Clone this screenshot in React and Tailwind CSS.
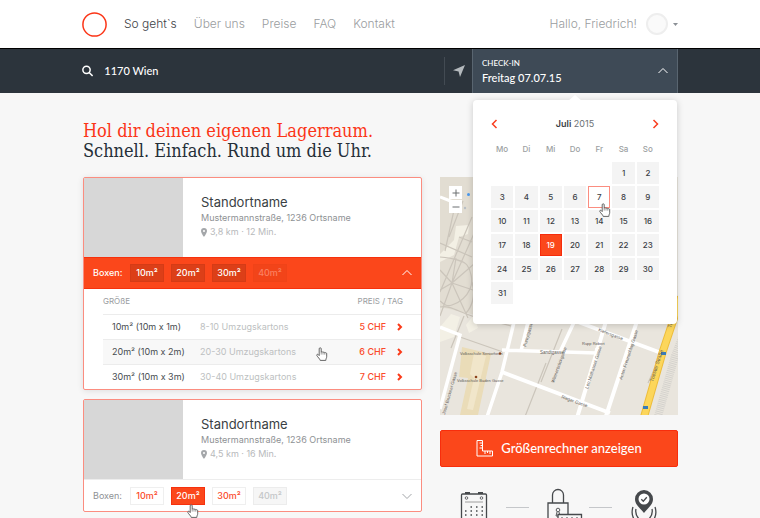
import { useState } from 'react'
import clsx from 'clsx'

const NAV = ['Über uns', 'Preise', 'FAQ', 'Kontakt']
const DAYS = ['Mo', 'Di', 'Mi', 'Do', 'Fr', 'Sa', 'So']
const SIZES = ['10m²', '20m²', '30m²', '40m²']

// July 2015 view, five empty slots before the 1st
const WEEKS = [0, 1, 2, 3, 4, 5].map(w => DAYS.map((_, d) => {
  const n = w * 7 + d - 4
  return n > 0 && n < 32 ? n : null
}))

const OFFERS = [
  { size: '10m² (10m x 1m)', boxes: '8-10 Umzugskartons', price: '5 CHF' },
  { size: '20m² (10m x 2m)', boxes: '20-30 Umzugskartons', price: '6 CHF', hover: true },
  { size: '30m² (10m x 3m)', boxes: '30-40 Umzugskartons', price: '7 CHF' },
]

function Chevron({ d, className }) {
  return (
    <svg viewBox="0 0 12 12" className={className} fill="none" stroke="currentColor" aria-hidden="true">
      <path d={d} />
    </svg>
  )
}

function Hand({ className }) {
  return (
    <svg viewBox="0 0 12 14" className={clsx('pointer-events-none absolute z-30 h-[14px] w-[12px]', className)} aria-hidden="true">
      <path d="M3.2 8.6V1.8c0-1.4 2-1.4 2 0v3.4c.3-.7 1.6-.6 1.8.3.4-.6 1.6-.5 1.8.4.5-.5 1.9-.3 1.9.8v3.1c0 1-.8 1.7-.9 3.6H4.2C4 12 1.6 10 .9 8.7.3 7.5 1.6 6.8 2.3 7.6z" fill="#fff" stroke="#555" strokeWidth=".9" strokeLinejoin="round" />
      <path d="M5.2 5v2.6M7 5.6v2M8.8 6v1.7" fill="none" stroke="#777" strokeWidth=".7" />
    </svg>
  )
}

function Header() {
  return (
    <header className="flex h-12 items-center bg-white px-[82px] text-[12px] font-light text-[#9a9da0]">
      <a href="#start" aria-label="Start" className="mr-[17px]">
        <svg viewBox="0 0 25 25" className="size-[25px]"><circle cx="12.5" cy="12.5" r="11.6" fill="none" stroke="#fb3517" strokeWidth="1.5" /></svg>
      </a>
      <nav className="flex items-center gap-[17px]">
        <a href="#so" className="text-[#3d4246]">So geht`s</a>
        {NAV.map(n => <a key={n} href="#nav">{n}</a>)}
      </nav>
      <button className="ml-auto flex items-center">
        <span>Hallo, Friedrich!</span>
        <span className="ml-[9px] size-[22px] rounded-full border-2 border-[#eeeeee] bg-[#fafafa]" />
        <svg viewBox="0 0 5 3" className="ml-[5px] h-[3px] w-[5px]"><path d="M0 0h5L2.5 3z" fill="#8b9096" /></svg>
      </button>
    </header>
  )
}

function Calendar() {
  const [selected, setSelected] = useState(19)
  return (
    <div className="absolute inset-x-px top-full z-20 mt-[7px] rounded-sm bg-white px-4 pt-[15px] pb-[18px] text-[#3b4045] shadow-[0_1px_7px_rgba(0,0,0,0.18)]">
      <svg viewBox="0 0 14 6" className="absolute -top-[5px] left-1/2 h-[6px] w-[14px] -translate-x-1/2"><path d="M0 6L7 0l7 6z" fill="#fff" /></svg>
      <div className="flex h-[18px] items-center justify-between">
        <button aria-label="Voriger Monat" className="text-[#f93d1e]"><Chevron d="M7.5 2L3.5 6l4 4" className="size-3 stroke-[1.5]" /></button>
        <h2 className="text-[9px] text-[#6d7175]"><b className="font-semibold text-[#3b4045]">Juli</b> 2015</h2>
        <button aria-label="Nächster Monat" className="text-[#f93d1e]"><Chevron d="M4.5 2l4 4-4 4" className="size-3 stroke-[1.5]" /></button>
      </div>
      <table className="mt-[7px] w-full table-fixed border-separate border-spacing-[2px] text-center">
        <thead>
          <tr>{DAYS.map(d => <th key={d} className="h-[18px] p-0 pb-1 text-[8px] font-medium text-[#9c9fa2]">{d}</th>)}</tr>
        </thead>
        <tbody>
          {WEEKS.map((week, i) => (
            <tr key={i}>
              {week.map((n, j) => (
                <td key={j} className="h-[22px] p-0">
                  {n && (
                    <button
                      onClick={() => setSelected(n)}
                      className={clsx('relative block h-[22px] w-full text-[8px] leading-[20px] font-medium',
                        n === selected ? 'border border-[#f62c0c] bg-[#fb471b] text-white'
                          : n === 7 ? 'border border-[#fb8d80] bg-white' : 'border border-[#f4f4f4] bg-[#f4f4f4]')}
                    >
                      {n}
                      {n === 7 && <Hand className="top-4 left-[10px]" />}
                    </button>
                  )}
                </td>
              ))}
            </tr>
          ))}
        </tbody>
      </table>
    </div>
  )
}

function SearchBar() {
  return (
    <div className="flex h-[45px] items-stretch border-t border-black bg-[#2c343c] px-[82px] text-white">
      <label className="flex flex-1 items-center">
        <svg viewBox="0 0 12 12" className="size-3" fill="none" stroke="#fff" strokeWidth="1.6"><circle cx="4.8" cy="4.8" r="3.9" /><path d="M7.6 7.6L11.3 11.3" /></svg>
        <input aria-label="Ort" defaultValue="1170 Wien" className="ml-[11px] w-full min-w-0 bg-transparent font-[Lato] text-[11px] font-medium outline-none" />
      </label>
      <button aria-label="Mein Standort" className="my-2 border-l border-[#434b53] pr-[7px] pl-2">
        <svg viewBox="0 0 12 12" className="size-3"><path d="M12 0L7 12 5.6 6.6 0 5.2z" fill="#b4b9bd" /></svg>
      </button>
      <div className="relative w-[206px]">
        <button className="flex h-full w-full items-center justify-between border-x border-[#596570] bg-[#3e4a56] pr-2 pl-[9px] text-left font-[Lato]">
          <span>
            <span className="block text-[8px] leading-3 font-medium">CHECK-IN</span>
            <span className="block text-[11px] leading-[17px] font-medium">Freitag 07.07.15</span>
          </span>
          <Chevron d="M1.5 8L6 3.5 10.5 8" className="size-3" />
        </button>
        <Calendar />
      </div>
    </div>
  )
}

function Place({ distance }) {
  return (
    <div className="flex h-[79px] items-stretch">
      <div className="w-[99px] bg-[#d7d7d7]" />
      <div className="pt-[15px] pl-[18px]">
        <h2 className="text-[13px] leading-[18px] text-[#3a3f44]">Standortname</h2>
        <p className="text-[9px] leading-[14px] text-[#8e9194]">Mustermannstraße, 1236 Ortsname</p>
        <p className="flex items-center text-[9px] leading-[14px] text-[#b7b9bb]">
          <svg viewBox="0 0 6 9" className="mr-[3px] h-[9px] w-[6px]"><path fillRule="evenodd" d="M3 0a3 3 0 0 1 3 3c0 2-3 6-3 6S0 5 0 3a3 3 0 0 1 3-3zm0 2a1 1 0 1 0 0 2 1 1 0 0 0 0-2z" fill="#a4a7aa" /></svg>
          {distance}
        </p>
      </div>
    </div>
  )
}

function OpenCard() {
  return (
    <article className="rounded-xs border border-[#fb8d80] bg-white shadow-[0_1px_6px_rgba(0,0,0,0.1)]">
      <Place distance="3,8 km · 12 Min." />
      <div className="flex h-8 items-center gap-[7px] border-y border-[#f6310d] bg-[#fb471b] pr-2 pl-[9px] text-[9px] font-medium text-white">
        <span className="w-[30px]">Boxen:</span>
        {SIZES.map(s => (
          <button key={s} disabled={s === '40m²'} className="h-[18px] w-[34px] border border-[#d53b16] bg-[#dc3f18] disabled:border-[#f04318] disabled:bg-[#f24419] disabled:text-[#fb8161]">{s}</button>
        ))}
        <button aria-label="Zuklappen" className="ml-auto"><Chevron d="M1.5 8L6 3.5 10.5 8" className="size-3" /></button>
      </div>
      <div className="relative pl-[19px]">
        <table className="w-full text-left text-[9px]">
          <thead>
            <tr className="h-[25px] text-[8px] text-[#9a9da0]">
              <th colSpan="2" className="p-0 font-normal">GRÖßE</th>
              <th colSpan="2" className="p-0 pr-[18px] text-right font-normal">PREIS / TAG</th>
            </tr>
          </thead>
          <tbody>
            {OFFERS.map(o => (
              <tr key={o.size} className={clsx('h-[25px] border-t border-[#ececec]', o.hover && 'bg-[#f8f8f8]')}>
                <td className="w-[97px] p-0 pl-[9px] whitespace-nowrap text-[#474c50]">{o.size}</td>
                <td className="p-0 text-[#bdbfc1]">{o.boxes}</td>
                <td className="p-0 text-right font-medium text-[#fb4a2a]">{o.price}</td>
                <td className="w-[35px] p-0">
                  <button aria-label={o.size + ' wählen'} className="ml-2 block text-[#fb3a18]"><Chevron d="M4 3l3 3-3 3" className="size-3 stroke-2" /></button>
                </td>
              </tr>
            ))}
          </tbody>
        </table>
        <Hand className="top-[58px] right-[93px]" />
      </div>
    </article>
  )
}

function ClosedCard() {
  return (
    <article className="rounded-xs border border-[#fb8d80] bg-white">
      <Place distance="4,5 km · 16 Min." />
      <div className="flex h-8 items-center gap-[7px] border-t border-[#ededed] pr-2 pl-[9px] text-[9px] text-[#8e9194]">
        <span className="w-[30px]">Boxen:</span>
        {SIZES.map((s, i) => (
          <button key={s} disabled={i === 3} className={clsx('relative h-[18px] w-[34px] border font-medium',
            i === 1 ? 'border-[#f6310d] bg-[#fb471b] text-white' : i === 3 ? 'border-[#ececec] bg-[#f6f6f6] text-[#c4c6c8]' : 'border-[#efefef] bg-white text-[#fb4a2a]')}>
            {s}
            {i === 1 && <Hand className="top-4 left-[15px]" />}
          </button>
        ))}
        <button aria-label="Aufklappen" className="ml-auto text-[#a3a6a9]"><Chevron d="M1.5 4L6 8.5 10.5 4" className="size-3" /></button>
      </div>
    </article>
  )
}

function Map() {
  return (
    <div className="relative">
      <svg viewBox="0 0 238 238" className="block w-full bg-[#e9e5dd]" role="img" aria-label="Karte" fontFamily="Liberation Sans" fontSize="4.5">
        <path d="M0 0h40v139L0 130z" fill="#e2ddd2" />
        <g fill="#f3f0e5">
          <path d="M0 77l14-14 2-14 13-1-1 9-9 3-5 18-14 7zM0 150l11-13 9 3-6 20-14 5zM26 148l9-12 9 5-8 4 2 6-9 5z" />
        </g>
        <g fill="none" stroke="#cbc5bb" strokeWidth="1.2">
          <path d="M32 40L0 115M16 24L5 74M23 24L9 60M0 66l32 14M19 60l13 5M12 106L36 52M12 106l22-19M12 106l24 8M12 106l16 35M12 106L0 139M12 106l-12-13M12 106l-12 7M12 106l4-25" />
          <path d="M0 80c12 1 24 4 27 8s7 15 3 24-12 14-18 16-8-1-12-4M0 130c9-2 17 4 32 9l39 10M32 105c4 15-1 26-6 31M11 171l13-32M42 139l25 9" />
          <path d="M20 160l43 15M106 186L77 260M122 152l-21 53M238 140l-30 66" />
        </g>
        <path d="M22 170l29 7-13 61H20l8-37-9-1z" fill="#eadcb8" />
        <path d="M34 176l12 3-13 54-6-1 7-31-4-4z" fill="#f1e6ca" />
        <g fill="none" stroke="#fff">
          <path d="M0 20l13 5" strokeWidth="3" />
          <path d="M0 150l20 8L0 232M75 141l-13 54-18 54M62 173l94 3 1-5M89 141l-8 33M136 141l-16 34" strokeWidth="3.5" />
          <path d="M62 195l108 41M130 142l94 35M167 141l-30 100M198 141l-32 98" strokeWidth="4" />
        </g>
        <path d="M246 125l-19 49-18 64" fill="none" stroke="#d4d2cd" strokeWidth="8" strokeDasharray="1 1" transform="translate(8 5)" />
        <path d="M241 120l-18 54-19 66" fill="none" stroke="#edbd3c" strokeWidth="8" />
        <path d="M241 120l-18 54-19 66" fill="none" stroke="#fcd65b" strokeWidth="6" />
        <g fill="#387bb8"><rect x="221" y="175" width="5" height="3" /><rect x="203" y="229" width="5" height="3" /></g>
        <g fill="#5e5a55">
          <text x="20" y="178" fontSize="4">Volksschule Seniorheim</text>
          <text x="17" y="205" fontSize="4">Volksschule Baden Gasse</text>
          <text x="142" y="168" fontSize="4">Rupp Robert</text>
          <text x="100" y="177">Sandtgasse</text>
          <text transform="translate(158 154) rotate(21)">Kiefersgasse</text>
          <text transform="translate(121 221) rotate(20)">Rieger Gasse</text>
          <text transform="translate(114 206) rotate(-70)">Wienerbrückgasse</text>
          <text transform="translate(148 212) rotate(-72)">Leo Mathauser Gasse</text>
          <text transform="translate(182 203) rotate(-72)">Anton Freunschlag Gasse</text>
          <text transform="translate(5 238) rotate(-74)">Josef Bruckner Gasse</text>
          <text transform="translate(86 170) rotate(-74)">Purkytgasse</text>
          <text fontSize="5" transform="translate(213 205) rotate(-72)">Triester Straße</text>
          <text fontSize="5" transform="translate(231 151) rotate(-72)">Triester</text>
        </g>
        <circle cx="60" cy="176.5" r="1.2" fill="#8d431d" /><circle cx="36" cy="200" r="1.3" fill="#8d431d" />
        <circle cx="28.5" cy="17.5" r="1.5" fill="#4c9aee" /><circle cx="25" cy="31" r="1.2" fill="#b8bec4" />
      </svg>
      <div className="absolute top-[9px] left-[9px] flex w-[13px] flex-col gap-px text-[#6b6e70]">
        <button aria-label="Vergrößern" className="h-[13px] bg-white"><Chevron d="M6 2.5v7M2.5 6h7" className="mx-auto size-3" /></button>
        <button aria-label="Verkleinern" className="h-[13px] bg-white"><Chevron d="M2.5 6h7" className="mx-auto size-3" /></button>
      </div>
    </div>
  )
}

function Steps() {
  return (
    <div className="mt-[21px] flex items-start justify-center gap-[18px]">
      <svg viewBox="0 0 28 40" className="h-10 w-7" fill="none" stroke="#46494c" strokeWidth="1.3">
        <rect x="1.5" y="6" width="25" height="34" rx="1" />
        <path d="M5 5h5M18 5h5" strokeWidth="2" /><path d="M5 14h18" strokeWidth=".8" stroke="#888" />
        <circle cx="6.5" cy="10" r="1.3" strokeWidth=".8" /><circle cx="21.5" cy="10" r="1.3" strokeWidth=".8" />
        <path d="M10.5 19H23M5 23h18M5 27h18" strokeWidth="1.5" strokeDasharray="1.5 4" />
      </svg>
      <span className="mt-[19px] h-px w-[23px] bg-[#c5c7ca]" />
      <svg viewBox="0 0 24 40" className="h-10 w-6 overflow-visible" fill="none" stroke="#46494c" strokeWidth="1.3">
        <path d="M5.5 15V7a5.5 5.5 0 0 1 11 0v8M12 40H1V15h20v11" />
        <circle cx="11" cy="22" r="1.8" strokeWidth=".9" /><path d="M10 24l-1 4h4l-1-4" strokeWidth=".9" />
        <path d="M11 40V26.5h23.5V40z" fill="#f7f7f7" /><path d="M14 30.5h18M14 35h18" strokeWidth="2" strokeDasharray="2 3" />
      </svg>
      <span className="mt-[19px] h-px w-[23px] bg-[#c5c7ca]" />
      <svg viewBox="0 0 28 40" className="h-10 w-7" fill="none" stroke="#46494c" strokeWidth="1.3">
        <path d="M14 2a9 9 0 0 1 9 9c0 6-6 10-9 14-3-4-9-8-9-14a9 9 0 0 1 9-9z" fill="#46494c" stroke="none" />
        <circle cx="14" cy="11" r="5.5" fill="#fff" stroke="none" /><path d="M11.3 11.2l2 2 3.5-4" />
        <path d="M6 21c-1 4 1 8 4 11M22 21c1 4-1 8-4 11M3 19c-2 6 0 12 4 16M25 19c2 6 0 12-4 16" />
      </svg>
    </div>
  )
}

export default function App() {
  return (
    <div className="h-screen overflow-hidden bg-[#f7f7f7] font-[Inter,sans-serif]">
      <Header />
      <SearchBar />
      <main className="pt-7 pr-[82px] pl-[83px]">
        <h1 className="font-['DejaVu_Serif_Condensed','DejaVu_Serif',serif] text-[18px] leading-5 text-[#252f38]">
          <span className="text-[#fb3517]">Hol dir deinen eigenen Lagerraum.</span><br />
          Schnell. Einfach. Rund um die Uhr.
        </h1>
        <div className="mt-4 grid grid-cols-[1fr_238px] items-start gap-[18px]">
          <section className="flex flex-col gap-[9px]">
            <OpenCard />
            <ClosedCard />
          </section>
          <aside>
            <Map />
            <button className="mt-[15px] flex h-[37px] w-full items-center justify-center gap-2 rounded-xs border border-[#f82d0c] bg-[#fb471b] font-[Lato] text-[13px] font-medium text-white">
              <svg viewBox="0 0 17 17" className="size-[17px]" fill="none" stroke="#fff"><path d="M1 .5h5.5V11H16.5v5H1zM3.5 3h3M4.5 5.5h2M3.5 8h3M9 11v3M11.5 11v2M14 11v3" /></svg>
              Größenrechner anzeigen
            </button>
            <Steps />
          </aside>
        </div>
      </main>
    </div>
  )
}
